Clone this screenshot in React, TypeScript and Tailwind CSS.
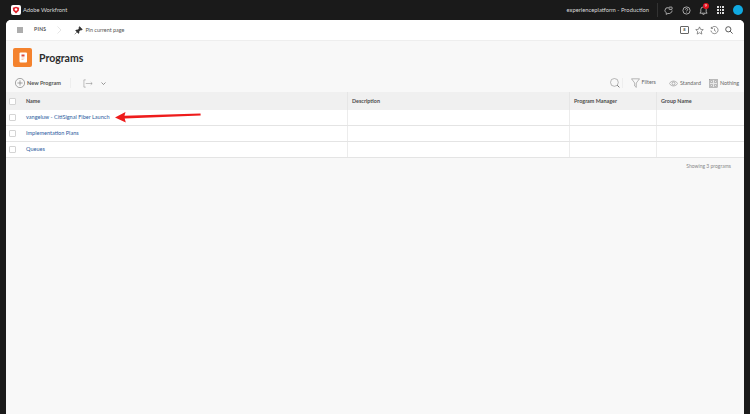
import React from "react";

const F = "font-['Lato',sans-serif]";

function Row({ name }: { name: string }) {
  return (
    <div className="flex h-4 bg-white border-b border-[#e4e4e4]">
      <div className="w-5 flex items-center shrink-0 pl-[3px]">
        <div className="w-[7px] h-[7px] border border-[#d4d4d4] rounded-[1px] bg-white" />
      </div>
      <div className="w-[322px] shrink-0 flex items-center text-[5.55px] text-[#2c5b9e] border-r border-[#ececec]">{name}</div>
      <div className="w-[222px] shrink-0 border-r border-[#ececec]" />
      <div className="w-[87px] shrink-0 border-r border-[#ececec]" />
      <div className="flex-1" />
    </div>
  );
}

export default function App() {
  return (
    <div className={`${F} w-[750px] h-[414px] bg-[#1a1a1a] flex flex-col overflow-hidden`}>
      {/* Top bar */}
      <div className="h-5 shrink-0 flex items-center pl-[11px] pr-[7px] text-[#d8d8d8]">
        <div className="w-[10px] h-[10px] bg-white rounded-[2px] flex items-center justify-center">
          <svg width="8" height="8" viewBox="0 0 10 10">
            <path d="M5 .8 9 2.2 8.5 6 5 9.4 1.5 6 1 2.2Z" fill="#e0202a" />
            <circle cx="5" cy="4.4" r="1.6" fill="white" />
          </svg>
        </div>
        <span className="ml-[2px] text-[5.75px]">Adobe Workfront</span>
        <span className="ml-auto text-[5.8px]">experienceplatform - Production</span>
        <div className="w-px h-[14px] bg-[#333] ml-[8px]" />
        <svg className="ml-[6px]" width="9" height="9" viewBox="0 0 10 10" fill="none" stroke="#ddd" strokeWidth=".8">
          <path d="M1 5a3.5 3.5 0 0 1 4-3.2M9 5a3.7 3.7 0 0 1-4.6 3.3L2.4 9.3l.2-1.7A3.6 3.6 0 0 1 1 5" />
          <rect x="5.6" y="1.2" width="3.4" height="2.6" rx=".5" />
        </svg>
        <svg className="ml-[9px]" width="9" height="9" viewBox="0 0 10 10" fill="none" stroke="#ddd" strokeWidth=".8">
          <circle cx="5" cy="5" r="4" />
          <path d="M3.8 4c0-1.6 2.5-1.6 2.5 0 0 1-1.3 1-1.3 2M5 7v.5" />
        </svg>
        <div className="relative ml-[8px] w-[9px] h-[9px]">
          <svg width="9" height="9" viewBox="0 0 10 10" fill="none" stroke="#ddd" strokeWidth=".8">
            <path d="M1 8h8L8 6.5V4a3 3 0 0 0-6 0v2.5ZM4 8.5a1 1 0 0 0 2 0" />
          </svg>
          <div className="absolute -top-[3px] left-[4px] w-[6px] h-[6px] rounded-full bg-[#e3101c] text-white text-[4px] leading-[6px] text-center">9</div>
        </div>
        <div className="ml-[9px] grid grid-cols-3 gap-[1px] w-[7px]">
          {Array.from({ length: 9 }).map((_, i) => (
            <div key={i} className="w-[1.7px] h-[1.7px] bg-[#ddd]" />
          ))}
        </div>
        <div className="ml-[9px] w-[10px] h-[10px] rounded-full bg-[#10a9e0]" />
      </div>

      {/* Main panel */}
      <div className="mx-[6px] flex-1 bg-[#f8f8f8] rounded-t-[5px] flex flex-col overflow-hidden relative">
        <div className="h-[21px] shrink-0 bg-white border-b border-[#eeeeee] flex items-center pl-[11px] pr-[11px] text-[#444]">
          <svg width="6" height="6" viewBox="0 0 6 6" stroke="#333" strokeWidth=".8">
            <path d="M0 1h6M0 3h6M0 5h6" />
          </svg>
          <span className="ml-[11px] text-[5px] font-bold tracking-[0.3px] text-[#555]">PINS</span>
          <svg className="ml-[11px]" width="5" height="8" viewBox="0 0 5 8" fill="none" stroke="#d5d5d5" strokeWidth=".6">
            <path d="M.5.5 4 4 .5 7.5" />
          </svg>
          <svg className="ml-[12px]" width="9" height="9" viewBox="0 0 9 9">
            <path d="M5.6.6 8.4 3.4 7.6 4 6.6 3.9 5 5.5 5 7 4.4 7.4 1.6 4.6 2 4 3.5 4 5.1 2.4 5 1.4ZM3 6 .7 8.3" fill="#333" stroke="#333" strokeWidth=".5" />
          </svg>
          <span className="ml-[2px] text-[5.45px] text-[#555]">Pin current page</span>
          <div className="ml-auto w-[9px] h-[8px] border border-[#666] rounded-[1px] flex items-center justify-center text-[4px] font-bold text-[#444]">8</div>
          <svg className="ml-[6px]" width="9" height="9" viewBox="0 0 10 10" fill="none" stroke="#555" strokeWidth=".7">
            <path d="M5 1 6.2 3.7 9.2 4 7 6 7.6 9 5 7.5 2.4 9 3 6 .8 4 3.8 3.7Z" />
          </svg>
          <svg className="ml-[6px]" width="9" height="9" viewBox="0 0 10 10" fill="none" stroke="#555" strokeWidth=".7">
            <path d="M1.5 2.5A4 4 0 1 1 1 5M1.5 1v1.8h1.8M5 2.8V5l1.6 1" />
          </svg>
          <svg className="ml-[6px]" width="8" height="8" viewBox="0 0 8 8" fill="none" stroke="#333" strokeWidth=".8">
            <circle cx="3.3" cy="3.3" r="2.6" />
            <path d="m5.2 5.2 2.4 2.4" />
          </svg>
        </div>

        <div className="h-[31px] shrink-0 flex items-start pt-[7px] pl-[7px]">
          <div className="w-[19px] h-[19px] rounded-[2px] bg-[#f4822d] flex items-center justify-center">
            <svg width="10" height="11" viewBox="0 0 10 11">
              <rect x="1.5" y=".5" width="7.5" height="10" rx="1" fill="white" />
              <rect x="3.5" y="2.5" width="3" height="2" fill="#e04a3a" />
              <path d="M3.5 6h3M3.5 7.5h2" stroke="#f4a878" strokeWidth=".6" />
            </svg>
          </div>
          <span className="ml-[7px] pt-[1px] text-[10.5px] leading-[19px] font-bold text-[#2c2c2c]">Programs</span>
        </div>

        <div className="h-[20px] shrink-0 flex items-center pt-[2px] pl-[9px] pr-[5px] text-[#555]">
          <svg width="10" height="10" viewBox="0 0 10 10" fill="none" stroke="#555" strokeWidth=".5">
            <circle cx="5" cy="5" r="4.6" />
            <path d="M5 2.4v5.2M2.4 5h5.2" />
          </svg>
          <span className="ml-[2px] text-[5.6px] font-bold text-[#555]">New Program</span>
          <div className="ml-[9px] w-px h-[10px] bg-[#eeeeee]" />
          <svg className="ml-[12px]" width="10" height="9" viewBox="0 0 11 9" fill="none" stroke="#777" strokeWidth=".5">
            <path d="M3 .5H1v8h2M3 4.5h7M8.5 3l1.6 1.5L8.5 6" />
          </svg>
          <svg className="ml-[8px]" width="5" height="3" viewBox="0 0 5 3" fill="none" stroke="#555" strokeWidth=".6">
            <path d="m.5.5 2 2 2-2" />
          </svg>
          <svg className="ml-auto" width="10" height="10" viewBox="0 0 10 10" fill="none" stroke="#777" strokeWidth=".5">
            <circle cx="4.4" cy="4.4" r="3.9" />
            <path d="m7.2 7.2 2.2 2.2" strokeWidth="1" />
          </svg>
          <div className="ml-[2px] w-px h-[10px] bg-[#eeeeee]" />
          <svg className="ml-[8px]" width="9" height="10" viewBox="0 0 9 10" fill="none" stroke="#777" strokeWidth=".5">
            <path d="M.5.8h8L5.3 5v4.4L3.7 8V5Z" />
          </svg>
          <span className="ml-[2px] text-[5.3px] text-[#666]">Filters</span>
          <svg className="ml-[13px]" width="9" height="7" viewBox="0 0 9 7" fill="none" stroke="#777" strokeWidth=".5">
            <path d="M.3 3.5C2.5.3 6.5.3 8.7 3.5 6.5 6.7 2.5 6.7.3 3.5Z" />
            <circle cx="4.5" cy="3.5" r="1.5" />
          </svg>
          <span className="ml-[2px] text-[5.4px] text-[#666]">Standard</span>
          <svg className="ml-[8px]" width="9" height="9" viewBox="0 0 9 9" fill="none" stroke="#888" strokeWidth=".5">
            <rect x=".3" y=".3" width="8.4" height="8.4" fill="#e8e8e8" />
            <path d="M1.5 1.5h2v2h-2ZM5.5 1.5h2v2h-2ZM1.5 5.5h2v2h-2ZM5.5 5.5h2v2h-2Z" />
          </svg>
          <span className="ml-[2px] text-[5.4px] text-[#666]">Nothing</span>
        </div>

        <div className="flex h-[18px] shrink-0 bg-[#f0f0f0] text-[5.4px] font-bold text-[#4b4b4b]">
          <div className="w-5 flex items-center shrink-0 pl-[3px]">
            <div className="w-[7px] h-[7px] border border-[#d4d4d4] rounded-[1px] bg-white" />
          </div>
          <div className="w-[322px] shrink-0 flex items-center border-r border-[#e6e6e6]">Name</div>
          <div className="w-[222px] shrink-0 pl-[4px] flex items-center border-r border-[#e6e6e6]">Description</div>
          <div className="w-[87px] shrink-0 pl-[4px] flex items-center border-r border-[#e6e6e6]">Program Manager</div>
          <div className="flex-1 pl-[4px] flex items-center">Group Name</div>
        </div>

        <Row name="vangeluw - CitiSignal Fiber Launch" />
        <Row name="Implementation Plans" />
        <Row name="Queues" />

        <div className="h-[17px] flex items-center justify-end pr-[13px] text-[5px] text-[#888]">Showing 3 programs</div>

        <svg className="absolute left-[109px] top-[91px]" width="88" height="12" viewBox="0 0 88 12">
          <path d="M0 6.5 10.5 1 9.5 4.8 85.5 2.4 85.7 4.4 9.7 7.6 10.8 11.5Z" fill="#ee1c1c" />
        </svg>
      </div>
    </div>
  );
}
